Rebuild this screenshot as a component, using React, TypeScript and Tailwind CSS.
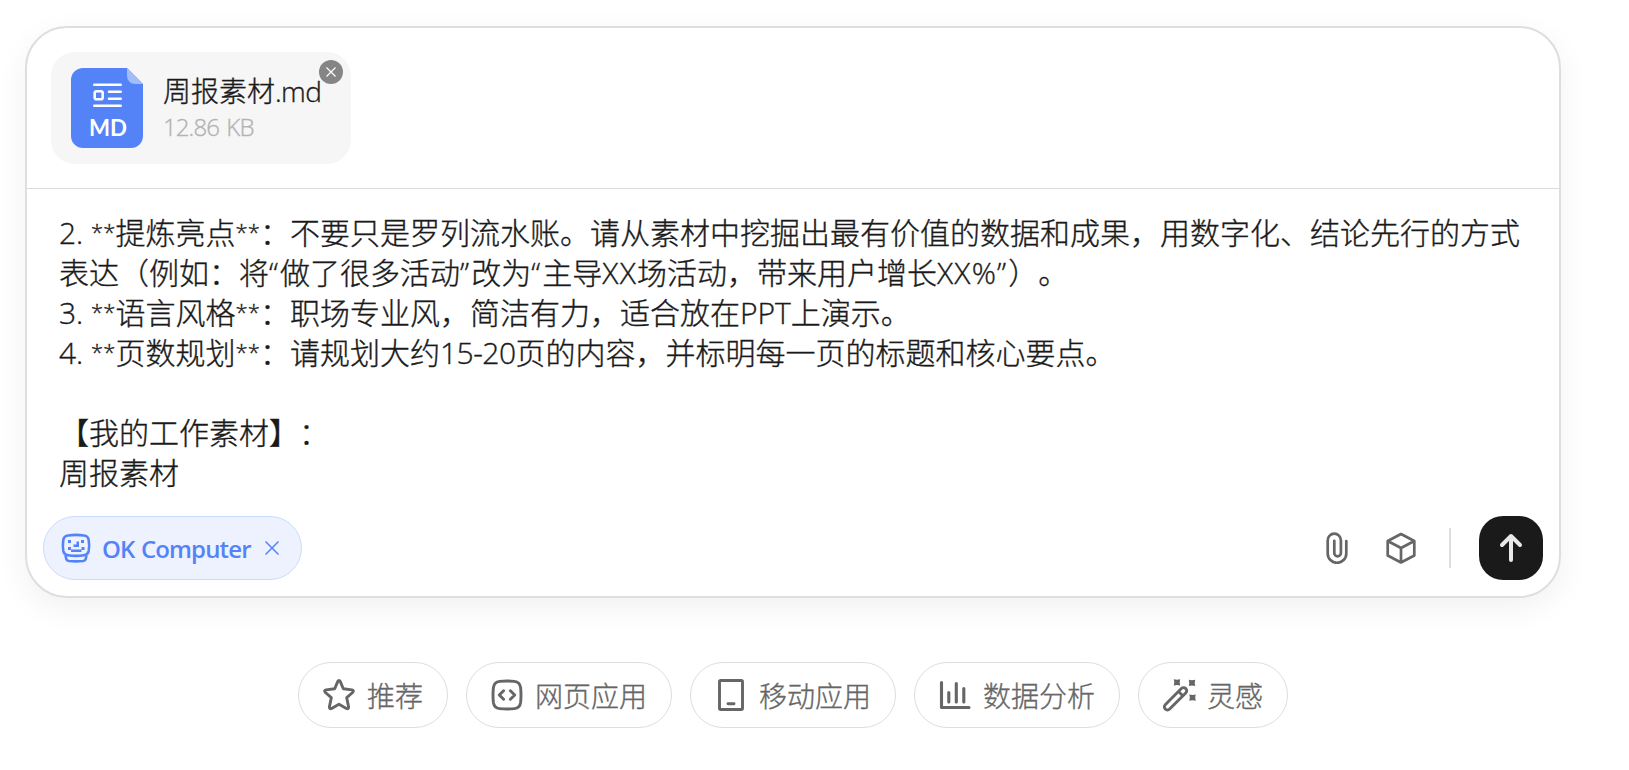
import React from "react";

const lines = [
  "2. **提炼亮点**：不要只是罗列流水账。请从素材中挖掘出最有价值的数据和成果，用数字化、结论先行的方式",
  "表达（例如：将“做了很多活动”改为“主导XX场活动，带来用户增长XX%”）。",
  "3. **语言风格**：职场专业风，简洁有力，适合放在PPT上演示。",
  "4. **页数规划**：请规划大约15-20页的内容，并标明每一页的标题和核心要点。",
  "",
  "【我的工作素材】：",
  "周报素材",
];

const segmentClass = (part: string) => {
  if (part === "**") return "align-[4px] text-[22px] leading-none tracking-[0.1px]";
  if (part === "“" || part === "”") return "tracking-[2.1px]";
  if (part.startsWith("XX")) return "tracking-[1.2px]";
  if (part === "15-20") return "tracking-[-0.5px]";
  return "";
};

const FileIcon = () => (
  <svg className="h-20 w-[72px] shrink-0" viewBox="0 0 72 80" fill="none">
    <path d="M12 0H56L72 16V68a12 12 0 0 1-12 12H12A12 12 0 0 1 0 68V12A12 12 0 0 1 12 0Z" fill="#5483F7" />
    <path d="M56 0L72 16H64a8 8 0 0 1-8-8Z" fill="#9EBDFA" />
    <g stroke="#fff" strokeWidth="2.6" strokeLinecap="round">
      <path d="M23.3 16.8H49.7M38 23.8H49.7M38 30.8H49.7M23.3 37.7H49.7" />
      <rect x="23.7" y="23.3" width="8" height="8" rx="1.8" />
    </g>
    <text
      x="18"
      y="68"
      textLength="38"
      lengthAdjust="spacingAndGlyphs"
      fontFamily="Lato"
      fontWeight="700"
      fontSize="23.5"
      fill="#fff"
    >
      MD
    </text>
  </svg>
);

const ComputerIcon = () => (
  <svg className="h-8 w-8" viewBox="0 0 32 32" fill="none" stroke="currentColor" strokeWidth="2.6">
    <path d="M8 3.5Q16 2.2 24 3.5Q28 4 28.7 8Q29.6 13.5 28.7 19Q28 22.7 24 23.3Q16 24.4 8 23.3Q4 22.7 3.3 19Q2.4 13.5 3.3 8Q4 4 8 3.5Z" />
    <path d="M5.5 23.5L6.3 27.2Q7 28.7 9 29Q16 29.8 23 29Q25 28.7 25.7 27.2L26.5 23.5" />
    <path
      d="M8 8h3v3h-3zM21 8h3v3h-3zM16.5 9.5h2.5v5.5h-5.5v-2.5h3zM8 15h3v3h-3zM21.5 15h3v3h-3zM11 17.5h10.5v2.5h-10.5z"
      fill="currentColor"
      stroke="none"
    />
  </svg>
);

const StarIcon = () => (
  <svg className="h-8 w-8" viewBox="0 0 32 32" fill="none" stroke="currentColor" strokeWidth="2.9" strokeLinejoin="round">
    <path d="M14.7 2.6Q16 0.4 17.3 2.6L20.3 9.7L29 10.9Q31.3 11.6 29.6 13.5L23.7 18.7L25.6 27.9Q25.7 30.4 23.4 29.4L16 25.2L8.6 29.4Q6.3 30.4 6.4 27.9L8.3 18.7L2.4 13.5Q0.7 11.6 3 10.9L11.7 9.7Z" />
  </svg>
);

const CodeIcon = () => (
  <svg className="h-8 w-8" viewBox="0 0 32 32" fill="none" stroke="currentColor" strokeWidth="2.9" strokeLinecap="round" strokeLinejoin="round">
    <path d="M8.5 2.4Q16 1.6 23.5 2.4Q28.8 3 29.6 8.5Q30.4 16 29.6 23.5Q28.8 29 23.5 29.6Q16 30.4 8.5 29.6Q3.2 29 2.4 23.5Q1.6 16 2.4 8.5Q3.2 3 8.5 2.4Z" />
    <path d="M12.6 11.7L8.3 16L12.6 20.3M19.4 11.7L23.7 16L19.4 20.3" />
  </svg>
);

const TabletIcon = () => (
  <svg className="h-8 w-8" viewBox="0 0 32 32" fill="none" stroke="currentColor" strokeWidth="2.9" strokeLinecap="round">
    <rect x="4.5" y="1.5" width="23" height="29" rx="1.2" />
    <path d="M13 24.8H19" />
  </svg>
);

const ChartIcon = () => (
  <svg className="h-8 w-8" viewBox="0 0 32 32" fill="none" stroke="currentColor" strokeWidth="3.1" strokeLinecap="round" strokeLinejoin="round">
    <path d="M2.5 3.5V28.5H30M9.8 13.5V23M17.3 4.5V23M24.8 9.5V23" />
  </svg>
);

const WandIcon = () => (
  <svg className="h-8 w-8 overflow-visible" viewBox="0 0 32 32" fill="none" stroke="currentColor" strokeWidth="2.9">
    <rect x="-3.1" y="-14.5" width="6.2" height="29" rx="3.1" transform="translate(12.5 19.8) rotate(45)" />
    <path d="M15.5 12.5L20 17" />
    <path
      d="M10.8.2l3.2.5 3.2-.5-.5 3.2.5 3.2-3.2-.5-3.2.5.5-3.2zM25.8.7l3.2.5 3.2-.5-.5 3.2.5 3.2-3.2-.5-3.2.5.5-3.2zM26.3 15.4l3.2.5 3.2-.5-.5 3.2.5 3.2-3.2-.5-3.2.5.5-3.2z"
      fill="currentColor"
      stroke="none"
    />
  </svg>
);

const PaperclipIcon = () => (
  <svg className="h-8 w-8" viewBox="0 0 32 32" fill="none" stroke="currentColor" strokeWidth="2.7" strokeLinecap="round">
    <path d="M25.3 9V21.5a9.3 9.3 0 0 1-18.6 0V8.3a6.6 6.6 0 0 1 13.2 0V21a3.3 3.3 0 0 1-6.6 0V8.8" />
  </svg>
);

const CubeIcon = () => (
  <svg className="h-8 w-8" viewBox="0 0 32 32" fill="none" stroke="currentColor" strokeWidth="2.7" strokeLinejoin="round">
    <path d="M16 2L29.3 9V23.5L16 30.5L2.7 23.5V9ZM2.7 9L16 16L29.3 9M16 16V30.5" />
  </svg>
);

const suggestions = [
  { label: "推荐", icon: <StarIcon /> },
  { label: "网页应用", icon: <CodeIcon /> },
  { label: "移动应用", icon: <TabletIcon /> },
  { label: "数据分析", icon: <ChartIcon /> },
  { label: "灵感", icon: <WandIcon /> },
];

const App = () => {
  return (
    <div className="h-[770px] w-[1629px] overflow-hidden bg-white pt-[26px] pl-[25px] font-['Open_Sans','Noto_Sans_CJK_SC',sans-serif] font-light text-[#1a1a1a] [-webkit-text-stroke:0.35px] [text-spacing-trim:space-all]">
      <div className="flex h-[572px] w-[1536px] flex-col rounded-[42px] border-2 border-[#dedede] bg-white shadow-[0_10px_32px_rgba(0,0,0,0.06)]">
        <div className="h-[161px] shrink-0 border-b border-[#dcdcdc] pt-6 pl-6">
          <div className="relative flex h-28 w-[300px] items-center rounded-3xl bg-[#f6f6f6] pl-5">
            <FileIcon />
            <div className="ml-5 flex flex-col pt-0.5 whitespace-nowrap">
              <span className="text-[28px] leading-9">
                周报素材<span className="tracking-[-0.6px]">.md</span>
              </span>
              <span className="text-2xl leading-9 tracking-[-0.9px] text-[#b3b3b3] [word-spacing:2px]">12.86 KB</span>
            </div>
            <button className="absolute top-2 right-2 flex size-6 items-center justify-center rounded-full bg-[#858585]">
              <svg className="size-[10px]" viewBox="0 0 10 10" stroke="#fff" strokeWidth="1.2">
                <path d="M.5.5l9 9M9.5.5l-9 9" />
              </svg>
            </button>
          </div>
        </div>
        <div className="grow pt-6 pl-8">
          {lines.map((line, i) => (
            <p key={i} className="h-10 text-[30px] leading-10 whitespace-nowrap">
              {line.split(/(\*\*|[“”]|XX%?|15-20)/).map((part, j) => (
                <span key={j} className={segmentClass(part)}>
                  {part}
                </span>
              ))}
            </p>
          ))}
        </div>
        <div className="flex h-20 shrink-0 items-start justify-between px-4">
          <button className="flex h-16 w-[259px] items-center rounded-full border border-[#ccdafc] bg-[#edf2fe] pl-4 text-[#5483f7]">
            <ComputerIcon />
            <span className="ml-[10px] pt-0.5 text-2xl font-semibold tracking-[-0.85px] whitespace-nowrap [-webkit-text-stroke:0] [word-spacing:1px]">
              OK Computer
            </span>
            <svg className="ml-3.5 size-[14px]" viewBox="0 0 14 14" stroke="currentColor" strokeWidth="1.5">
              <path d="M.5.5l13 13M13.5.5l-13 13" />
            </svg>
          </button>
          <div className="flex h-16 items-center text-[#666]">
            <PaperclipIcon />
            <span className="ml-8">
              <CubeIcon />
            </span>
            <span className="mr-7 ml-8 h-10 w-0.5 bg-[#dedede]" />
            <button className="flex size-16 items-center justify-center rounded-3xl bg-[#1a1a1a] text-[#e8e8e8]">
              <svg className="size-8" viewBox="0 0 32 32" fill="none" stroke="currentColor" strokeWidth="4" strokeLinecap="round" strokeLinejoin="round">
                <path d="M16 28V4M7 13L16 4L25 13" />
              </svg>
            </button>
          </div>
        </div>
      </div>
      <div className="mt-16 flex w-[1536px] justify-center gap-[18px]">
        {suggestions.map((item) => (
          <button
            key={item.label}
            className="flex h-[66px] items-center gap-3 rounded-full border border-[#dedede] px-6 text-[28px] text-[#666]"
          >
            {item.icon}
            <span className="pt-0.5 whitespace-nowrap">{item.label}</span>
          </button>
        ))}
      </div>
    </div>
  );
};

export default App;
